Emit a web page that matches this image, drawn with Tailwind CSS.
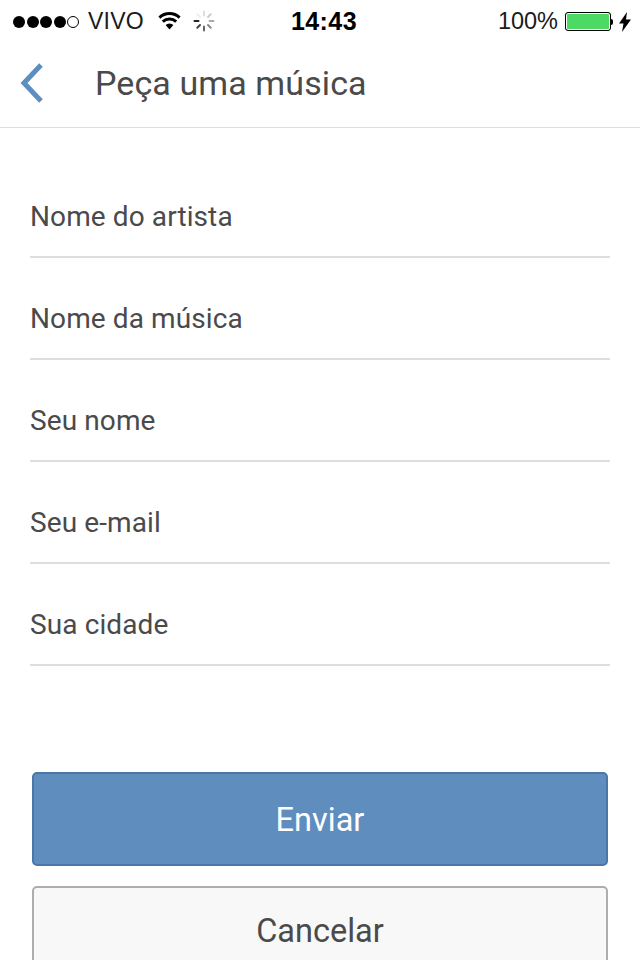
<!DOCTYPE html>
<html lang="pt">
<head>
  <meta charset="UTF-8" />
  <meta name="viewport" content="width=device-width, initial-scale=1.0" />
  <title>Peça uma música</title>
  <script src="https://cdn.jsdelivr.net/npm/@tailwindcss/browser@4"></script>
</head>
<body class="h-[960px] overflow-hidden bg-white font-['Roboto',sans-serif] text-[#4a4a4a]">
  <!-- status bar -->
  <div class="relative flex h-[40px] items-center justify-between pl-[13px] pr-[9px] pt-[3px] font-['Liberation_Sans',sans-serif] text-[23.5px] text-[#1a1a1a]">
    <div class="flex items-center">
      <div class="flex gap-[1.5px]">
        <span class="h-[12px] w-[12px] rounded-full bg-black"></span>
        <span class="h-[12px] w-[12px] rounded-full bg-black"></span>
        <span class="h-[12px] w-[12px] rounded-full bg-black"></span>
        <span class="h-[12px] w-[12px] rounded-full bg-black"></span>
        <span class="h-[12px] w-[12px] rounded-full border border-black"></span>
      </div>
      <span class="ml-[9px] text-[23px] tracking-[0.2px]">VIVO</span>
      <svg class="ml-[13px] -mt-[3px]" width="25" height="19" viewBox="0 0 25 19">
        <path d="M12.5 18.500 8.600 14a5.500 5.500 0 0 1 7.800 0z" fill="#000"/>
        <path d="M5.800 10.600a9.800 9.800 0 0 1 13.400 0M2.400 6.600a14.800 14.800 0 0 1 20.200 0" fill="none" stroke="#000" stroke-width="3"/>
      </svg>
      <svg class="ml-[11px] -mt-[2px]" width="22" height="22" viewBox="0 0 22 22" stroke-width="2" stroke-linecap="round">
        <path d="M11 1.500v4" stroke="#ddd"/>
        <path d="M17.700 4.300 15 7" stroke="#ccc"/>
        <path d="M20.500 11h-4" stroke="#aaa"/>
        <path d="M17.700 17.700 15 15" stroke="#888"/>
        <path d="M11 20.500v-4" stroke="#666"/>
        <path d="M4.300 17.700 7 15" stroke="#444"/>
        <path d="M1.500 11h4" stroke="#222"/>
        <path d="M4.300 4.300 7 7" stroke="#eee"/>
      </svg>
    </div>
    <span class="absolute left-[291px] top-[6px] text-[25px] font-bold leading-[30px] tracking-[0.4px] text-black">14:43</span>
    <div class="flex items-center">
      <span>100%</span>
      <div class="ml-[7px] h-[19px] w-[46px] rounded-[3px] border border-black bg-[#4cd964] shadow-[inset_0_0_0_1px_#fff]"></div>
      <div class="h-[6px] w-[2px] rounded-r-full bg-black"></div>
      <svg class="ml-[6px]" width="12" height="20" viewBox="0 0 12 20"><path d="M8 0 0 11.500h4.500L3 20l9-12.500H7z" fill="#000"/></svg>
    </div>
  </div>

  <!-- nav -->
  <div class="flex h-[88px] items-center border-b border-[#ddd] pb-[1px]">
    <svg class="ml-[20px]" width="24" height="40" viewBox="0 0 24 40"><path d="M21 2 4 20l17 18" fill="none" stroke="#5e8dbf" stroke-width="5"/></svg>
    <h1 class="ml-[51px] text-[34px] tracking-[0.1px]">Peça uma música</h1>
  </div>

  <!-- form -->
  <form class="mt-[28px] px-[30px] text-[28px] tracking-[0.1px]">
    <div class="flex h-[102px] items-center border-b-2 border-[#ddd] pt-[22px]">Nome do artista</div>
    <div class="flex h-[102px] items-center border-b-2 border-[#ddd] pt-[22px]">Nome da música</div>
    <div class="flex h-[102px] items-center border-b-2 border-[#ddd] pt-[22px]">Seu nome</div>
    <div class="flex h-[102px] items-center border-b-2 border-[#ddd] pt-[22px]">Seu e-mail</div>
    <div class="flex h-[102px] items-center border-b-2 border-[#ddd] pt-[22px]">Sua cidade</div>
  </form>

  <!-- buttons -->
  <div class="mt-[106px] flex flex-col gap-[20px] px-[32px] text-[32.5px]">
    <button class="h-[94px] rounded-[5px] border-2 border-[#4a76a8] bg-[#5f8dbe] pt-[2px] text-white">Enviar</button>
    <button class="h-[94px] rounded-[5px] border-2 border-[#adadad] bg-[#f8f8f8] pb-[4px]">Cancelar</button>
  </div>
</body>
</html>
